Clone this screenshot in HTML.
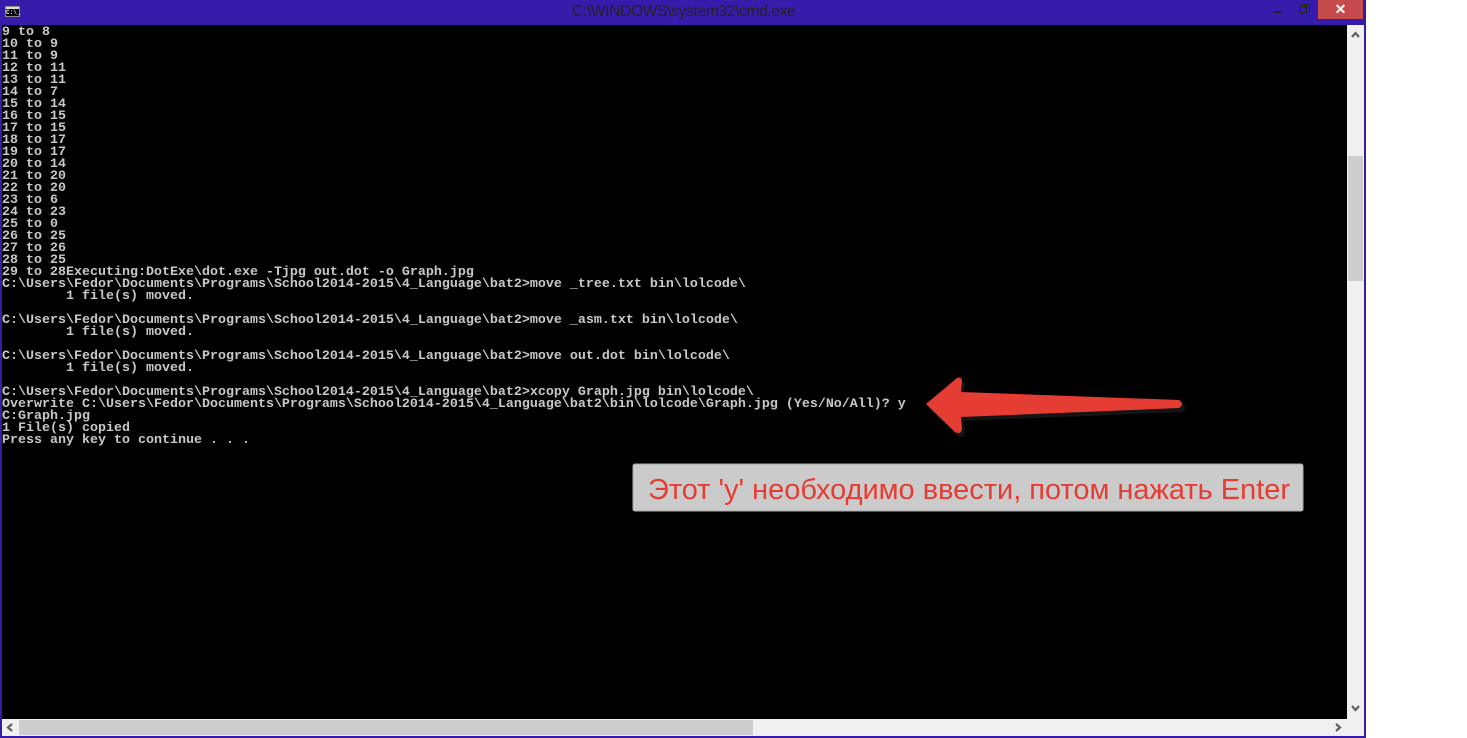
<!DOCTYPE html>
<html><head><meta charset="utf-8"><style>
html,body{margin:0;padding:0;background:#fff;width:1467px;height:738px;overflow:hidden;position:relative}
div{position:absolute;box-sizing:border-box}
#term{left:2px;top:25px;width:1345px;height:694px;background:#000}
pre{margin:0;position:absolute;left:2px;top:27px;font-family:"Liberation Mono",monospace;font-size:13.33px;line-height:12px;color:#c8c8c8;font-weight:bold;white-space:pre}
</style></head><body>
<div style="left:0;top:0;width:1366px;height:738px;background:#351caa"></div>
<div id="term"></div>
<div style="left:572px;top:3px;font-family:'Liberation Sans',sans-serif;font-size:15.5px;color:#222;letter-spacing:-0.3px">C:\WINDOWS\system32\cmd.exe</div>
<div style="left:5px;top:6px;width:15px;height:11px;background:#ddd;border:1px solid #888"></div>
<div style="left:6px;top:9px;width:13px;height:7px;background:#000;color:#fff;font:bold 6px 'Liberation Mono',monospace;line-height:7px">C:\_</div>
<div style="left:1274px;top:11px;width:8px;height:2px;background:#222"></div>
<div style="left:1299px;top:6px;width:8px;height:7px;border:1.5px solid #222"></div>
<div style="left:1302px;top:4px;width:8px;height:7px;border-top:1.5px solid #222;border-right:1.5px solid #222"></div>
<div style="left:1318px;top:0;width:45px;height:19px;background:#c64b4b;color:#fff;text-align:center;font:bold 14px 'Liberation Sans',sans-serif;line-height:18px">✕</div>
<div style="left:1347px;top:25px;width:17px;height:694px;background:#f0f0f0"></div>
<div style="left:1348px;top:156px;width:15px;height:125px;background:#cdcdcd"></div>
<svg style="position:absolute;left:1347px;top:25px" width="17" height="694">
<path d="M5,12 L8.5,8 L12,12" fill="none" stroke="#606060" stroke-width="2.2"/>
<path d="M5,681 L8.5,685 L12,681" fill="none" stroke="#606060" stroke-width="2.2"/>
</svg>
<div style="left:2px;top:719px;width:1345px;height:17px;background:#f0f0f0"></div>
<div style="left:19px;top:720px;width:734px;height:15px;background:#cdcdcd"></div>
<div style="left:1347px;top:719px;width:17px;height:17px;background:#f0f0f0"></div>
<svg style="position:absolute;left:0;top:719px" width="1347" height="17">
<path d="M12,5 L8,8.5 L12,12" fill="none" stroke="#606060" stroke-width="2.2"/>
<path d="M1336,5 L1340,8.5 L1336,12" fill="none" stroke="#606060" stroke-width="2.2"/>
</svg>
<pre>9 to 8
10 to 9
11 to 9
12 to 11
13 to 11
14 to 7
15 to 14
16 to 15
17 to 15
18 to 17
19 to 17
20 to 14
21 to 20
22 to 20
23 to 6
24 to 23
25 to 0
26 to 25
27 to 26
28 to 25
29 to 28Executing:DotExe\dot.exe -Tjpg out.dot -o Graph.jpg
C:\Users\Fedor\Documents\Programs\School2014-2015\4_Language\bat2>move _tree.txt bin\lolcode\
        1 file(s) moved.

C:\Users\Fedor\Documents\Programs\School2014-2015\4_Language\bat2>move _asm.txt bin\lolcode\
        1 file(s) moved.

C:\Users\Fedor\Documents\Programs\School2014-2015\4_Language\bat2>move out.dot bin\lolcode\
        1 file(s) moved.

C:\Users\Fedor\Documents\Programs\School2014-2015\4_Language\bat2>xcopy Graph.jpg bin\lolcode\
Overwrite C:\Users\Fedor\Documents\Programs\School2014-2015\4_Language\bat2\bin\lolcode\Graph.jpg (Yes/No/All)? y
C:Graph.jpg
1 File(s) copied
Press any key to continue . . .</pre>
<svg style="position:absolute;left:0;top:0" width="1467" height="738">
<path d="M927,406 L958,379 Q963,377 963,383 L962,393 L1180,401 Q1186,405 1180,409 L962,418 L963,430 Q962,436 956,433 Z" fill="#222" transform="translate(2,3)" opacity="0.6"/>
<path d="M926,404 L957,378 Q962,376 962,382 L961,392 L1179,400 Q1185,404 1179,408 L961,417 L962,429 Q961,435 955,432 Z" fill="#e53c33"/>
<rect x="633" y="464" width="670" height="47" rx="2" fill="#cbcbcb" stroke="#aaa" stroke-width="1"/>
<text x="648" y="499" font-family="Liberation Sans, sans-serif" font-size="29" fill="#e53c33" textLength="642" lengthAdjust="spacingAndGlyphs">Этот 'y' необходимо ввести, потом нажать Enter</text>
</svg>
</body></html>
